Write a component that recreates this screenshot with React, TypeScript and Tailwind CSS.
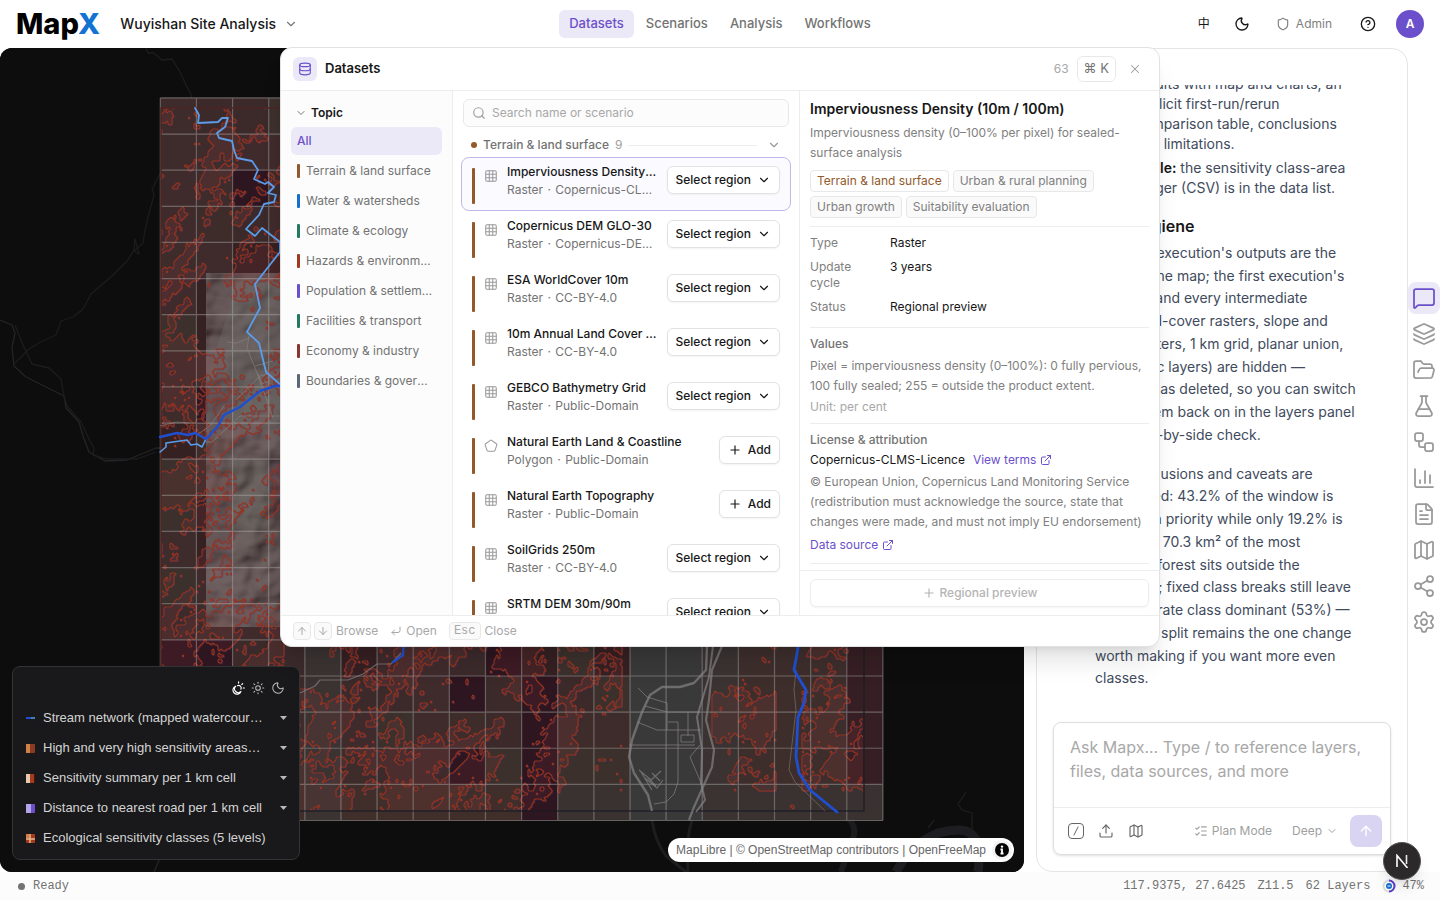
import {
  ArrowDown,
  ArrowUp,
  ChartColumn,
  ChevronDown,
  CircleHelp,
  CornerDownLeft,
  Database,
  ExternalLink,
  FileText,
  FlaskConical,
  FolderOpen,
  Grid3x3,
  Layers,
  ListChecks,
  Map,
  MessageSquare,
  Moon,
  Pentagon,
  Plus,
  Search,
  Settings,
  Share2,
  Shield,
  Sun,
  Upload,
  Workflow,
  X,
} from 'lucide-react';

const navItems = ['Datasets', 'Scenarios', 'Analysis', 'Workflows'];

const topics = [
  { label: 'Terrain & land surface', bar: 'bg-[#92592b]' },
  { label: 'Water & watersheds', bar: 'bg-[#1570cd]' },
  { label: 'Climate & ecology', bar: 'bg-[#237a63]' },
  { label: 'Hazards & environment', bar: 'bg-[#9f3a1c]' },
  { label: 'Population & settlements', bar: 'bg-[#6c50cb]' },
  { label: 'Facilities & transport', bar: 'bg-[#237a63]' },
  { label: 'Economy & industry', bar: 'bg-[#8a3430]' },
  { label: 'Boundaries & governance', bar: 'bg-[#5c6678]' },
];

const datasets = [
  { name: 'Imperviousness Density (10m / 100m)', kind: 'Raster', license: 'Copernicus-CLMS-Licence', regional: true },
  { name: 'Copernicus DEM GLO-30', kind: 'Raster', license: 'Copernicus-DEM-Licence', regional: true },
  { name: 'ESA WorldCover 10m', kind: 'Raster', license: 'CC-BY-4.0', regional: true },
  { name: '10m Annual Land Cover (Esri)', kind: 'Raster', license: 'CC-BY-4.0', regional: true },
  { name: 'GEBCO Bathymetry Grid', kind: 'Raster', license: 'Public-Domain', regional: true },
  { name: 'Natural Earth Land & Coastline', kind: 'Polygon', license: 'Public-Domain', regional: false },
  { name: 'Natural Earth Topography', kind: 'Raster', license: 'Public-Domain', regional: false },
  { name: 'SoilGrids 250m', kind: 'Raster', license: 'CC-BY-4.0', regional: true },
  { name: 'SRTM DEM 30m/90m', kind: 'Raster', license: 'Public-Domain', regional: true },
];

const railItems = [
  { label: 'Chat', icon: MessageSquare },
  { label: 'Layers', icon: Layers },
  { label: 'Files', icon: FolderOpen },
  { label: 'Lab', icon: FlaskConical },
  { label: 'Workflow', icon: Workflow },
  { label: 'Charts', icon: ChartColumn },
  { label: 'Reports', icon: FileText },
  { label: 'Maps', icon: Map },
  { label: 'Share', icon: Share2 },
  { label: 'Settings', icon: Settings },
];

const hygieneLines = [
  "The final execution's outputs are the",
  "used on the map; the first execution's",
  'datasets and every intermediate',
  '(both land-cover rasters, slope and',
  'water rasters, 1 km grid, planar union,',
  'hydrologic layers) are hidden —',
  'nothing was deleted, so you can switch',
  'any of them back on in the layers panel',
  'for a side-by-side check.',
];

const caveatLines = [
  'The conclusions and caveats are',
  'unchanged: 43.2% of the window is',
  'rated high priority while only 19.2% is',
  'protected 70.3 km² of the most',
  'sensitive forest sits outside the',
  'boundary; fixed class breaks still leave',
  'the moderate class dominant (53%) —',
  'threshold split remains the one change',
  'worth making if you want more even',
  'classes.',
];

// ---- map drawing ----

const CELL = 36.13;
const ORIGIN_X = 160.3;
const ORIGIN_Y = 97.9;

function hash(x: number, y: number) {
  let h = (x * 374761393 + y * 668265263) | 0;
  h = Math.imul(h ^ (h >>> 13), 1274126177);
  return ((h ^ (h >>> 16)) >>> 0) / 4294967295;
}

function noise(x: number, y: number) {
  const xi = Math.floor(x);
  const yi = Math.floor(y);
  const u = (x - xi) * (x - xi) * (3 - 2 * (x - xi));
  const v = (y - yi) * (y - yi) * (3 - 2 * (y - yi));
  const top = hash(xi, yi) * (1 - u) + hash(xi + 1, yi) * u;
  const bottom = hash(xi, yi + 1) * (1 - u) + hash(xi + 1, yi + 1) * u;
  return top * (1 - v) + bottom * v;
}

// how much lower the sensitivity gets inside valleys and the built-up strip
function valley(x: number, y: number) {
  if (x > 622 && x < 712 && y > 600) return 0.5;
  if (x > 206 && y > 300 && y < 430) return 0.12;
  if (x > 776 && x < 802 && y > 640) return 0.3;
  if (x > 284 && x < 330 && y > 640 && y < 690) return 0.3;
  if (y > 790 && x > 590) return 0.3;
  if (x < 286 && y < 210) return 0.06;
  if (x < 286 && y > 560 && y < 600) return 0.06;
  return 0;
}

function sensitivity(x: number, y: number) {
  const wide = noise(x / 38 + 9.3, y / 44 + 4.7);
  // stretched along the ridges, which run north-east
  const mid = noise((x + y * 0.8) / 13 + 30, (x * 0.6 - y) / 27 + 60);
  const fine = noise((x + y * 0.4) / 6.3 + 40, (y - x * 0.4) / 6.7 + 80);
  const grain = noise(x / 2.7 + 17, y / 2.9 + 5);
  return wide * 0.38 + mid * 0.3 + fine * 0.2 + grain * 0.18 - valley(x, y);
}

function buildContours() {
  const step = 2;
  const level = 0.55;
  let lines = '';
  let fills = '';
  for (let y = 108; y < 810; y += step) {
    for (let x = 161; x < 863; x += step) {
      if (x > 286 && y < 640) continue;
      const a = sensitivity(x, y) > level;
      const b = sensitivity(x + step, y) > level;
      const c = sensitivity(x + step, y + step) > level;
      const d = sensitivity(x, y + step) > level;
      if (a) fills += `M${x} ${y}h${step}v${step}h-${step}z`;
      const key = (a ? 8 : 0) + (b ? 4 : 0) + (c ? 2 : 0) + (d ? 1 : 0);
      if (key === 0 || key === 15) continue;
      const h = step / 2;
      const n = `${x + h} ${y}`;
      const e = `${x + step} ${y + h}`;
      const s = `${x + h} ${y + step}`;
      const w = `${x} ${y + h}`;
      if (key === 1 || key === 14) lines += `M${w}L${s}`;
      else if (key === 2 || key === 13) lines += `M${s}L${e}`;
      else if (key === 3 || key === 12) lines += `M${w}L${e}`;
      else if (key === 4 || key === 11) lines += `M${n}L${e}`;
      else if (key === 6 || key === 9) lines += `M${n}L${s}`;
      else if (key === 7 || key === 8) lines += `M${w}L${n}`;
      else lines += `M${w}L${n}M${s}L${e}`;
    }
  }
  return { lines, fills };
}

const contours = buildContours();
const cellColors = ['#3d2c2a', '#402b2c', '#3c2a2b', '#3b302c', '#3f2a2c', '#352022', '#3d2c2b', '#3b302c', '#3d2a2b', '#2d1620'];

function cellColor(col: number, row: number) {
  if (row > 14 && col >= 13 && col <= 14) return '#3a393a';
  if (row > 14 && (col === 15 || col === 4)) return '#3a3332';
  if (row > 15 && col === 10) return '#2d1620';
  if (row === 19) return col < 10 ? '#402e2b' : '#3a3230';
  if (col === 19) return '#361f24';
  if (row > 14 && col > 15) return '#3d2e2c';
  return cellColors[Math.floor(hash(col + 3, row + 11) * cellColors.length)];
}

function MapCanvas() {
  const cells = [];
  for (let row = 0; row < 20; row++) {
    for (let col = 0; col < 20; col++) {
      cells.push(
        <rect
          key={`${row}-${col}`}
          x={ORIGIN_X + col * CELL}
          y={ORIGIN_Y + row * CELL}
          width={CELL}
          height={CELL}
          fill={cellColor(col, row)}
        />
      );
    }
  }

  let gridLines = '';
  for (let i = 0; i <= 20; i++) {
    gridLines += `M${ORIGIN_X + i * CELL} ${ORIGIN_Y}v${20 * CELL}M${ORIGIN_X} ${ORIGIN_Y + i * CELL}h${20 * CELL}`;
  }

  return (
    <svg className="absolute inset-0 size-full" viewBox="0 48 1024 824" preserveAspectRatio="xMinYMin slice" aria-hidden="true">
      <defs>
        <filter id="hillshade" x="0" y="0" width="1" height="1">
          <feTurbulence type="fractalNoise" baseFrequency="0.022 0.026" numOctaves="3" seed="8" />
          <feDiffuseLighting surfaceScale="13" diffuseConstant="1.05" lightingColor="#c2c0be">
            <feDistantLight azimuth="225" elevation="48" />
          </feDiffuseLighting>
        </filter>
      </defs>
      <rect x="0" y="48" width="1024" height="824" fill="#0d0d0d" />

      {/* faint basemap outside the study window */}
      <g fill="none" stroke="#242427" strokeWidth="1.3" strokeLinejoin="round">
        <path d="M146 48l2 5h6l8 7 10-1 8 13 6 13 5 9 2 13" stroke="#1d1d1f" />
        <path d="M161 172l-9 17 2 6-6 22-3 13-2 13-9 8 5 3-4-15-1 11-7 11-15 15-21 18-8 15-10 8-12 4-5 14-9 4-10 5-8 5-15 15" stroke="#1c1c1e" />
        <path d="M0 320l12 5 3 8-3 14 2 19 12 11 38 19 2 12 13 14 4 14 6 16 16 9 22-1 29-12h8" />
        <path d="M15 325l8 20 9 19 17 4 12 11 3 17 3 10 14 16 9 19 4 7-1 7 14 4h30l19-7" stroke="#1d1d1f" />
        <path d="M652 820c2 14 8 28 14 36l20 16M692 820c-6 18-4 36-4 52" stroke="#1d1d1f" strokeWidth="3" />
        <path d="M839 812c14 8 18 16 14 26l-12 34" stroke="#1c1c1f" strokeWidth="6" />
        <path d="M896 872c14-26 36-42 62-42 18 0 24 14 20 42" stroke="#1e1e22" strokeWidth="9" />
        <path d="M928 828l6-8M966 792l-8 12 4 6 10 3v22" stroke="#1e1e22" />
        <path d="M160 858l-6 14" />
      </g>

      {cells}
      <rect x="206" y="273" width="420" height="354" filter="url(#hillshade)" opacity="0.36" />
      <path d="M232 300l48-20v140l-48 18-26 2v-60z" fill="#6a6866" opacity="0.45" />

      <path d={contours.fills} fill="#a04040" fillOpacity="0.14" />
      <path d={contours.lines} fill="none" stroke="#27348f" strokeOpacity="0.25" strokeWidth="1" transform="translate(1 1)" />
      <path d={contours.lines} fill="none" stroke="#96331f" strokeWidth="1.2" />
      <path d={gridLines} fill="none" stroke="#b9b4b2" strokeOpacity="0.45" strokeWidth="1.2" />
      <rect x="161" y="108" width="703" height="703" fill="none" stroke="#1b1c26" strokeWidth="1.2" />
      <path d="M161 108v703M161 108h125" fill="none" stroke="#96331f" strokeOpacity="0.6" />

      {/* roads */}
      <g fill="none" stroke="#8a8888" strokeOpacity="0.65" strokeLinejoin="round">
        <path
          d="M707 646l-1 24-12 13-14 4h-18l-12 8-8 17-10 28-3 17 5 16 14 22 4 16"
          strokeWidth="2.4"
        />
        <path d="M713 646l-4 31-12 40 5 33-1 33 4 17-9 12" strokeWidth="2" />
        <path d="M722 646l-10 24-3 30-3 20 8 30-2 17-18 40-5 13" strokeWidth="2.2" />
        <path d="M638 688l9 9 20 6v27M645 706l22 6h33M637 722l20 8h44M629 745h66M668 722h10v60l-4 12-8 8-12 2M688 712v24M681 735h13v7h-13zM700 745l-10 12 12 28" strokeWidth="1" />
        <path d="M639 770l12 10 10-9M645 778l12 10 6-8M641 772l11 18M648 778l8 8M652 773l8 8" strokeWidth="1.2" />
        <path d="M300 693l15-7 5-6h28l15-6 14-10h14l10-11" strokeWidth="1.2" />
        <path d="M796 670l-2 20 2 20-7 60 6 12 30 29" strokeWidth="0.8" />
        <path d="M160 426l16-4 14 1M198 434l12-8 14-20M206 442h6l28-26h40M249 336l-2 12 10 25 9 25 7 20M227 342l10 1 12-5M255 366l18-5M236 400l24-24 8-2-5-10M258 374l4 10 8-4" strokeWidth="0.9" />
      </g>

      {/* streams */}
      <g fill="none" strokeLinejoin="round" strokeLinecap="round">
        <path
          d="M195 108l4 7-1 8 20-1 4-4h6l-3 9-8 6 2 5 13 3 2 9 3 8 15 3 6 9-4 9 11 5 3-2 6 5-6 6 8 2-2 7-10 2-5 11-13 14 9 7 7-8 18 14v10l-11 14-14 18 5 24-13 24 12 11 7 29 16 14"
          stroke="#5b9dea"
          strokeWidth="1.8"
        />
        <path d="M160 452l6-5v-4l21-3 4 5 6-1 5 3 4-8" stroke="#5b9dea" strokeWidth="1.6" />
        <path d="M160 437l17-4 11 2 7-2 11 6 12-13 6-11 16-8 20-16 15-5h8" stroke="#1f4fd1" strokeWidth="2.4" />
        <path d="M404 640l-1 15-10 7" stroke="#1f4fd1" strokeWidth="2.2" />
        <path d="M799 640l-1 8-4 22 12 20-2 13-6 14-2 40 3 16 11 17 27 22" stroke="#1f4fd1" strokeWidth="2.8" />
      </g>
    </svg>
  );
}

function SunMoonIcon() {
  return (
    <svg width="14" height="14" viewBox="0 0 24 24" fill="none" stroke="currentColor" strokeWidth="2" strokeLinecap="round" strokeLinejoin="round">
      <path d="M8 9a7 7 0 1 0 9 9 6 6 0 0 1-9-9z" />
      <path d="M11 8a4.500 4.500 0 0 1 6 6M13 1.500v2M20 4.500l-1.500 1.500M23 12h-2" />
    </svg>
  );
}

const legendLayers = [
  {
    name: 'Stream network (mapped watercourses)',
    expandable: true,
    swatch: (
      <>
        <path d="M0 4h5" stroke="#1f4fd1" strokeWidth="2" />
        <path d="M5 4h4" stroke="#5b9dea" strokeWidth="1.500" />
      </>
    ),
  },
  {
    name: 'High and very high sensitivity areas (vector)',
    expandable: true,
    swatch: (
      <>
        <rect width="9" height="9" rx="1" fill="#8a3c22" />
        <rect width="4" height="9" fill="#cf8148" />
      </>
    ),
  },
  {
    name: 'Sensitivity summary per 1 km cell',
    expandable: true,
    swatch: (
      <>
        <rect width="9" height="9" rx="1" fill="#4a1710" />
        <rect width="4" height="9" fill="#e8c9b0" />
        <rect x="4" width="4" height="9" fill="#a63a1d" />
      </>
    ),
  },
  {
    name: 'Distance to nearest road per 1 km cell',
    expandable: true,
    swatch: (
      <>
        <rect width="9" height="9" rx="1" fill="#6c50cb" />
        <rect width="5" height="9" fill="#b3a5ea" />
      </>
    ),
  },
  {
    name: 'Ecological sensitivity classes (5 levels)',
    expandable: false,
    swatch: (
      <>
        <rect width="9" height="9" rx="1" fill="#a63a1d" />
        <path d="M4 0v9M0 5h9" stroke="#e8b98c" strokeWidth="1.500" />
        <rect width="3" height="4" fill="#cf8148" />
      </>
    ),
  },
];

function Legend() {
  return (
    <section
      aria-label="Legend"
      className="absolute bottom-3 left-3 w-72 rounded-lg border border-[#333336] bg-[#19191b] px-3 pt-[6px] pb-[6px] font-['Liberation_Sans',sans-serif] text-[#d4d4d4]"
    >
      <div className="flex h-[30px] items-center justify-end gap-[6px] pr-[2px] text-[#b9b9b9]">
        <button aria-label="Automatic light" className="text-white">
          <SunMoonIcon />
        </button>
        <button aria-label="Day">
          <Sun size={14} strokeWidth={1.75} />
        </button>
        <button aria-label="Night">
          <Moon size={14} strokeWidth={1.75} />
        </button>
      </div>
      <ul>
        {legendLayers.map((layer) => (
          <li key={layer.name}>
            <button className="flex h-[30px] w-full items-center gap-2 text-left text-[13px]">
              <svg width="9" height="9" viewBox="0 0 9 9" className="ml-px shrink-0">
                {layer.swatch}
              </svg>
              <span className={layer.expandable ? 'min-w-0 flex-1 truncate pr-2' : 'min-w-0 flex-1 truncate'}>
                {layer.name}
              </span>
              {layer.expandable && (
                <svg width="7" height="4" viewBox="0 0 7 4" className="shrink-0">
                  <path d="M0 0h7L3.500 4z" fill="#b9b9b9" />
                </svg>
              )}
            </button>
          </li>
        ))}
      </ul>
    </section>
  );
}

function Header() {
  return (
    <header className="grid h-12 shrink-0 grid-cols-[1fr_auto_1fr] items-center px-4">
      <div className="flex items-center gap-5">
        <a href="#" className="text-[29px] leading-8 font-extrabold text-black">
          Map<span className="text-[#1273d3]">X</span>
        </a>
        <button className="flex items-center gap-2 text-sm font-medium text-[#171717]">
          Wuyishan Site Analysis
          <ChevronDown size={14} className="text-[#777]" />
        </button>
      </div>
      <nav className="flex items-center gap-[2px]">
        {navItems.map((item, index) => (
          <a
            key={item}
            href="#"
            className={
              index === 0
                ? 'flex h-7 items-center rounded-md bg-[#ebe8f7] px-[10px] text-[13px] font-medium text-[#6c50cb]'
                : 'flex h-7 items-center rounded-md px-[10px] text-[13px] font-medium text-[#737373]'
            }
          >
            {item}
          </a>
        ))}
      </nav>
      <div className="flex items-center justify-end text-[#171717]">
        <button className="w-8 text-xs">中</button>
        <button aria-label="Dark mode" className="ml-[14px]">
          <Moon size={16} />
        </button>
        <button className="ml-[26px] flex items-center gap-[6px] text-xs text-[#808080]">
          <Shield size={14} />
          Admin
        </button>
        <button aria-label="Help" className="ml-7">
          <CircleHelp size={16} />
        </button>
        <button className="ml-5 size-7 rounded-full bg-[#6c50cb] text-xs font-semibold text-white">A</button>
      </div>
    </header>
  );
}

function TopicList() {
  return (
    <aside className="w-[172px] shrink-0 border-r border-[#ededed] bg-[#fcfcfc] p-[10px] text-xs">
      <button className="flex h-6 items-center gap-1 px-1 font-semibold text-[#171717]">
        <ChevronDown size={12} className="text-[#777]" />
        Topic
      </button>
      <ul className="mt-[2px] flex flex-col gap-[2px]">
        <li>
          <button className="flex h-7 w-full items-center rounded-md bg-[#ebe8f7] px-[6px] font-medium text-[#6c50cb]">
            All
          </button>
        </li>
        {topics.map((topic) => (
          <li key={topic.label}>
            <button className="flex h-7 w-full items-center gap-[6px] pr-[9px] pl-[6px] text-left text-[#737373]">
              <span className={`h-[14px] w-[3px] shrink-0 rounded-[1px] ${topic.bar}`} />
              <span className="truncate">{topic.label}</span>
            </button>
          </li>
        ))}
      </ul>
    </aside>
  );
}

function DatasetList() {
  return (
    <div className="flex min-w-0 flex-1 flex-col px-2 pt-2 text-xs">
      <label className="mx-[2px] flex h-7 shrink-0 items-center gap-[6px] rounded-md border border-[#e8e8e8] bg-[#fcfcfc] px-2">
        <Search size={14} className="shrink-0 text-[#a0a0a0]" />
        <input
          type="search"
          aria-label="Search name or scenario"
          placeholder="Search name or scenario"
          className="w-full bg-transparent outline-none placeholder:text-[#a8a8a8]"
        />
      </label>
      <button className="mt-2 flex h-5 shrink-0 items-center gap-[6px] px-[10px] font-medium text-[#737373]">
        <span className="size-[6px] rounded-full bg-[#92592b]" />
        Terrain &amp; land surface
        <span className="font-normal text-[#a0a0a0]">9</span>
        <span className="h-px flex-1 bg-[#ededed]" />
        <ChevronDown size={14} className="ml-1 text-[#999]" />
      </button>
      <ul className="mt-[2px] min-h-0 flex-1 overflow-hidden">
        {datasets.map((item, index) => (
          <li
            key={item.name}
            className={
              index === 0
                ? 'flex h-[54px] items-start rounded-lg border border-[#c2b7ea] bg-[#fbfaff] px-[10px] pt-[5px]'
                : 'flex h-[54px] items-start border border-transparent px-[10px] pt-[5px]'
            }
          >
            <span className="mt-[5px] h-9 w-[3px] shrink-0 rounded-[1px] bg-[#92592b]" />
            <span className="mt-[6px] ml-[9px] shrink-0 text-[#999]">
              {item.kind === 'Raster' ? <Grid3x3 size={14} strokeWidth={1.75} /> : <Pentagon size={14} strokeWidth={1.75} />}
            </span>
            <div className="ml-[9px] min-w-0 flex-1 leading-[18px]">
              <p className="truncate font-medium text-[#171717]">{item.name}</p>
              <p className="truncate text-[#737373]">
                {item.kind} <span className="mx-px">·</span> {item.license}
              </p>
            </div>
            {item.regional ? (
              <button className="mt-[3px] ml-[10px] flex h-7 shrink-0 items-center gap-[6px] rounded-md border border-[#e2e2e2] bg-white px-2 font-medium text-[#171717] shadow-xs">
                Select region
                <ChevronDown size={14} />
              </button>
            ) : (
              <button className="mt-[3px] ml-[10px] flex h-7 shrink-0 items-center gap-[6px] rounded-md border border-[#e2e2e2] bg-white px-2 font-medium text-[#171717] shadow-xs">
                <Plus size={14} />
                Add
              </button>
            )}
          </li>
        ))}
      </ul>
    </div>
  );
}

function DatasetDetail() {
  return (
    <div className="flex w-[360px] shrink-0 flex-col border-l border-[#ededed] text-xs text-[#808080]">
      <div className="min-h-0 flex-1 overflow-hidden px-[10px] pt-2">
        <h3 className="text-sm leading-5 font-semibold text-[#171717]">Imperviousness Density (10m / 100m)</h3>
        <p className="mt-1 leading-5">Imperviousness density (0–100% per pixel) for sealed-surface analysis</p>
        <div className="mt-[7px] flex flex-wrap gap-1 border-b border-[#ededed] pb-2 leading-5">
          <span className="rounded-sm border border-[#e8e8e8] px-[6px] text-[#92592b]">Terrain &amp; land surface</span>
          {['Urban & rural planning', 'Urban growth', 'Suitability evaluation'].map((tag) => (
            <span key={tag} className="rounded-sm border border-[#e8e8e8] bg-[#fafafa] px-[6px]">
              {tag}
            </span>
          ))}
        </div>
        <dl className="grid grid-cols-[60px_1fr] gap-x-5 gap-y-2 border-b border-[#ededed] pt-2 pb-3 leading-4">
          <dt>Type</dt>
          <dd className="text-[#171717]">Raster</dd>
          <dt>Update cycle</dt>
          <dd className="text-[#171717]">3 years</dd>
          <dt>Status</dt>
          <dd className="text-[#171717]">Regional preview</dd>
        </dl>
        <div className="border-b border-[#ededed] pt-2 pb-2">
          <h4 className="leading-4 font-medium text-[#737373]">Values</h4>
          <p className="mt-1 leading-5">
            Pixel = imperviousness density (0–100%): 0 fully pervious, 100 fully sealed; 255 = outside the product extent.
          </p>
          <p className="mt-[3px] leading-4 text-[#a8a8a8]">Unit: per cent</p>
        </div>
        <div className="border-b border-[#ededed] pt-2 pb-[10px]">
          <h4 className="leading-4 font-medium text-[#737373]">License &amp; attribution</h4>
          <p className="mt-1 flex items-center gap-2 leading-4 text-[#171717]">
            Copernicus-CLMS-Licence
            <a href="#" className="flex items-center gap-1 text-[#6c50cb]">
              View terms <ExternalLink size={12} />
            </a>
          </p>
          <p className="mt-1 leading-5">
            © European Union, Copernicus Land Monitoring Service (redistribution must acknowledge the source, state that
            changes were made, and must not imply EU endorsement)
          </p>
          <a href="#" className="mt-[5px] flex items-center gap-1 leading-4 text-[#6c50cb]">
            Data source <ExternalLink size={12} />
          </a>
        </div>
      </div>
      <div className="border-t border-[#ededed] px-[10px] py-2">
        <button
          disabled
          className="flex h-7 w-full items-center justify-center gap-1 rounded-md border border-[#ededed] font-medium text-[#b4b4b4] shadow-xs"
        >
          <Plus size={14} />
          Regional preview
        </button>
      </div>
    </div>
  );
}

function DatasetsDialog() {
  return (
    <div className="absolute inset-x-0 top-[47px] flex justify-center">
      <div
        role="dialog"
        aria-label="Datasets"
        className="flex h-[600px] w-full max-w-[880px] flex-col overflow-hidden rounded-xl border border-[#e2e2e2] bg-white shadow-xl"
      >
        <div className="flex h-[43px] shrink-0 items-center border-b border-[#ededed] px-3 text-xs">
          <span className="flex size-6 items-center justify-center rounded-md bg-[#ebe8f7] text-[#6c50cb]">
            <Database size={14} />
          </span>
          <h2 className="ml-2 text-[13px] font-semibold text-[#171717]">Datasets</h2>
          <span className="ml-auto text-[#a8a8a8]">63</span>
          <kbd className="ml-2 flex h-[26px] items-center rounded-md border border-[#e8e8e8] px-[6px] font-[Inter,sans-serif] text-[13px] text-[#737373]">
            ⌘ K
          </kbd>
          <button aria-label="Close" className="mr-[5px] ml-3 text-[#999]">
            <X size={14} strokeWidth={1.75} />
          </button>
        </div>
        <div className="flex min-h-0 flex-1">
          <TopicList />
          <DatasetList />
          <DatasetDetail />
        </div>
        <div className="flex h-[31px] shrink-0 items-center border-t border-[#ededed] px-3 text-xs text-[#a8a8a8]">
          <kbd className="flex size-[18px] items-center justify-center rounded-sm border border-[#e8e8e8] bg-[#fafafa]">
            <ArrowUp size={12} />
          </kbd>
          <kbd className="ml-[3px] flex size-[18px] items-center justify-center rounded-sm border border-[#e8e8e8] bg-[#fafafa]">
            <ArrowDown size={12} />
          </kbd>
          <span className="ml-1">Browse</span>
          <CornerDownLeft size={12} className="ml-3" />
          <span className="ml-1">Open</span>
          <kbd className="ml-3 flex h-[18px] items-center rounded-sm border border-[#e8e8e8] bg-[#fafafa] px-1 font-['Liberation_Mono',monospace] text-xs">
            Esc
          </kbd>
          <span className="ml-1">Close</span>
        </div>
      </div>
    </div>
  );
}

function ChatPanel() {
  return (
    <section className="flex w-[372px] shrink-0 flex-col overflow-hidden rounded-2xl border border-[#e5e5e5] bg-white px-4 pt-9 pb-4">
      <div className="flex min-h-0 flex-1 flex-col justify-end overflow-hidden pr-4 pb-8 pl-[42px] text-sm whitespace-nowrap text-[#414b5d]">
        <ul className="flex flex-col gap-1 pl-10 leading-5">
          <li>
            results with map and charts, an
            <br />
            explicit first-run/rerun
            <br />
            comparison table, conclusions
            <br />
            and limitations.
          </li>
          <li>
            <strong className="font-semibold text-[#171717]">Table:</strong> the sensitivity class-area
            <br />
            ledger (CSV) is in the data list.
          </li>
        </ul>
        <h3 className="mt-4 mb-1 text-base leading-6 font-semibold text-[#171717]">Map hygiene</h3>
        <p className="leading-relaxed">
          {hygieneLines.map((line) => (
            <span key={line} className="block">
              {line}
            </span>
          ))}
        </p>
        <p className="mt-4 leading-relaxed">
          {caveatLines.map((line) => (
            <span key={line} className="block">
              {line}
            </span>
          ))}
        </p>
      </div>

      <form className="shrink-0 rounded-lg border border-[#dedede] shadow-sm">
        <textarea
          aria-label="Message"
          placeholder="Ask Mapx... Type / to reference layers, files, data sources, and more"
          className="block h-21 w-full resize-none px-4 pt-3 text-base leading-6 outline-none placeholder:text-[#a8a8a8]"
        />
        <div className="flex h-[47px] items-center border-t border-[#ededed] pr-2 pb-px pl-[14px] text-xs text-[#a0a0a0]">
          <button
            type="button"
            aria-label="Commands"
            className="flex size-4 items-center justify-center rounded-sm border border-[#666] text-[#666]"
          >
            <svg width="8" height="10" viewBox="0 0 8 10" fill="none" stroke="currentColor" strokeLinecap="round">
              <path d="M6 1L2 9" />
            </svg>
          </button>
          <button type="button" aria-label="Upload" className="ml-[14px] text-[#666]">
            <Upload size={16} strokeWidth={1.75} />
          </button>
          <button type="button" aria-label="Add map" className="ml-[14px] text-[#666]">
            <Map size={16} strokeWidth={1.75} />
          </button>
          <button type="button" className="ml-auto flex items-center gap-1">
            <ListChecks size={14} />
            Plan Mode
          </button>
          <button type="button" className="ml-5 flex items-center gap-1">
            Deep
            <ChevronDown size={12} />
          </button>
          <button
            type="button"
            aria-label="Send"
            className="ml-3 flex size-8 items-center justify-center rounded-lg bg-[#dad4f3] text-white"
          >
            <ArrowUp size={16} />
          </button>
        </div>
      </form>
    </section>
  );
}

function IconRail() {
  return (
    <nav className="flex w-8 shrink-0 flex-col items-center justify-center gap-1">
      {railItems.map((item, index) => (
        <button
          key={item.label}
          aria-label={item.label}
          className={
            index === 0
              ? 'flex size-8 items-center justify-center rounded-lg bg-[#ebe8f7] text-[#6c50cb]'
              : 'flex size-8 items-center justify-center text-[#999]'
          }
        >
          <item.icon size={24} strokeWidth={1.75} />
        </button>
      ))}
    </nav>
  );
}

function StatusBar() {
  return (
    <footer className="flex h-7 shrink-0 items-center bg-[#fcfcfc] px-4 font-['Liberation_Mono',monospace] text-xs text-[#737373]">
      <span className="ml-[2px] size-[7px] rounded-full bg-[#737373]" />
      <span className="ml-2">Ready</span>
      <span className="ml-auto">117.9375, 27.6425</span>
      <span className="ml-3">Z11.5</span>
      <span className="ml-3">62 Layers</span>
      <svg width="14" height="14" viewBox="0 0 14 14" className="ml-3" fill="none" strokeWidth="2">
        <circle cx="7" cy="7" r="5.500" stroke="#dcdcdc" />
        <path d="M7 1.500a5.500 5.500 0 0 1 0 11" stroke="#5b3fd0" />
        <circle cx="7" cy="7" r="3" fill="#1570cd" />
        <path d="M5.500 7h3" stroke="#fff" strokeWidth="1" />
      </svg>
      <span className="ml-[6px]">47%</span>
    </footer>
  );
}

export default function App() {
  return (
    <div className="relative flex h-screen flex-col overflow-hidden bg-white font-[Inter,'Noto_Sans_CJK_SC',sans-serif]">
      <Header />
      <main className="flex min-h-0 flex-1">
        <section aria-label="Map" className="relative mr-3 min-w-0 flex-1 overflow-hidden rounded-xl bg-[#0d0d0d]">
          <MapCanvas />
          <Legend />
          <div className="absolute right-[10px] bottom-[10px] flex h-6 items-center rounded-full bg-white pr-[2px] pl-2 font-['Liberation_Sans',sans-serif] text-xs text-[#666]">
            <a href="#">MapLibre</a>&nbsp;|&nbsp;<a href="#">© OpenStreetMap contributors</a>&nbsp;|&nbsp;
            <a href="#">OpenFreeMap</a>
            <button aria-label="Toggle attribution" className="ml-[6px] flex size-5 items-center justify-center rounded-full bg-[#f2f2f2]">
              <svg width="14" height="14" viewBox="0 0 14 14">
                <circle cx="7" cy="7" r="7" fill="#000" />
                <circle cx="7" cy="3.600" r="1.200" fill="#fff" />
                <path d="M5.500 6.500H7v4M5.500 10.500h3" stroke="#fff" strokeWidth="1.800" fill="none" />
              </svg>
            </button>
          </div>
        </section>
        <ChatPanel />
        <IconRail />
      </main>
      <StatusBar />
      <DatasetsDialog />
      <button
        aria-label="Open dev tools"
        className="absolute right-[19px] bottom-5 flex size-[38px] items-center justify-center rounded-full border border-[#555] bg-[#2b2929] shadow-lg"
      >
        <svg width="14" height="14" viewBox="0 0 14 14" fill="none" stroke="#fff" strokeWidth="1.600">
          <path d="M2 13V1.500L12.500 14" />
          <path d="M11.500 1v9" strokeOpacity="0.9" />
        </svg>
      </button>
    </div>
  );
}
